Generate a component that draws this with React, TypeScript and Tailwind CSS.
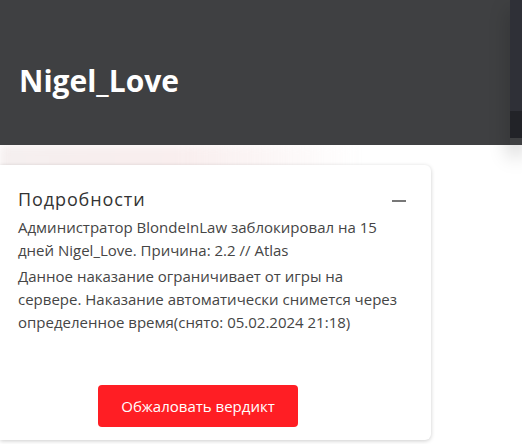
import React from "react";

export default function App() {
  return (
    <div
      className="relative w-[522px] h-[444px] overflow-hidden bg-white"
      style={{ fontFamily: '"Open Sans", "Noto Sans", sans-serif' }}
    >
      {/* Header */}
      <div className="relative z-10 flex h-[145px] bg-[#3f4042]">
        <div className="flex-1 flex items-end pb-[49px] pl-[19px]">
          <h1 className="text-[30px] leading-none font-bold text-white">Nigel_Love</h1>
        </div>
        <div className="w-[12px] flex flex-col shadow-[0_10px_20px_rgba(0,0,0,0.25)]">
          <div className="h-[111px] bg-[#2f3037]" />
          <div className="h-[27px] bg-[#222328]" />
        </div>
      </div>

      {/* Body */}
      <div className="relative h-[299px] bg-white">
        {/* faint backdrop */}
        <div className="absolute left-0 top-0 h-[30px] w-[360px] bg-gradient-to-r from-[#f5efef] via-[#f9eeee] to-white/0 blur-[4px]" />
        <div className="relative top-[20px] w-[431px] h-[275px] bg-white rounded-r-md shadow-[0_1px_4px_rgba(0,0,0,0.2)] pl-[18px] pr-[30px] pt-[21px] flex flex-col">
          <div className="flex items-center justify-between">
            <span className="text-[18px] leading-[26px] tracking-[0.9px] text-[#333]">Подробности</span>
            <span className="-mr-[5px] mt-[4px] w-[14px] h-[2px] bg-[#777]" />
          </div>
          <p className="mt-[4px] text-[15px] leading-[23px] text-[#454545]">
            Администратор BlondeInLaw заблокировал на 15 дней Nigel_Love. Причина: 2.2 // Atlas
          </p>
          <p className="mt-[3px] text-[15px] leading-[23px] text-[#454545]">
            Данное наказание ограничивает от игры на сервере. Наказание автоматически снимется через определенное время(снято: 05.02.2024 21:18)
          </p>
          <div className="mt-auto mb-[13px] ml-[80px]">
            <button className="w-[200px] h-[42px] rounded-[4px] bg-[#ff1e24] text-white text-[15px]">
              Обжаловать вердикт
            </button>
          </div>
        </div>
      </div>
    </div>
  );
}
